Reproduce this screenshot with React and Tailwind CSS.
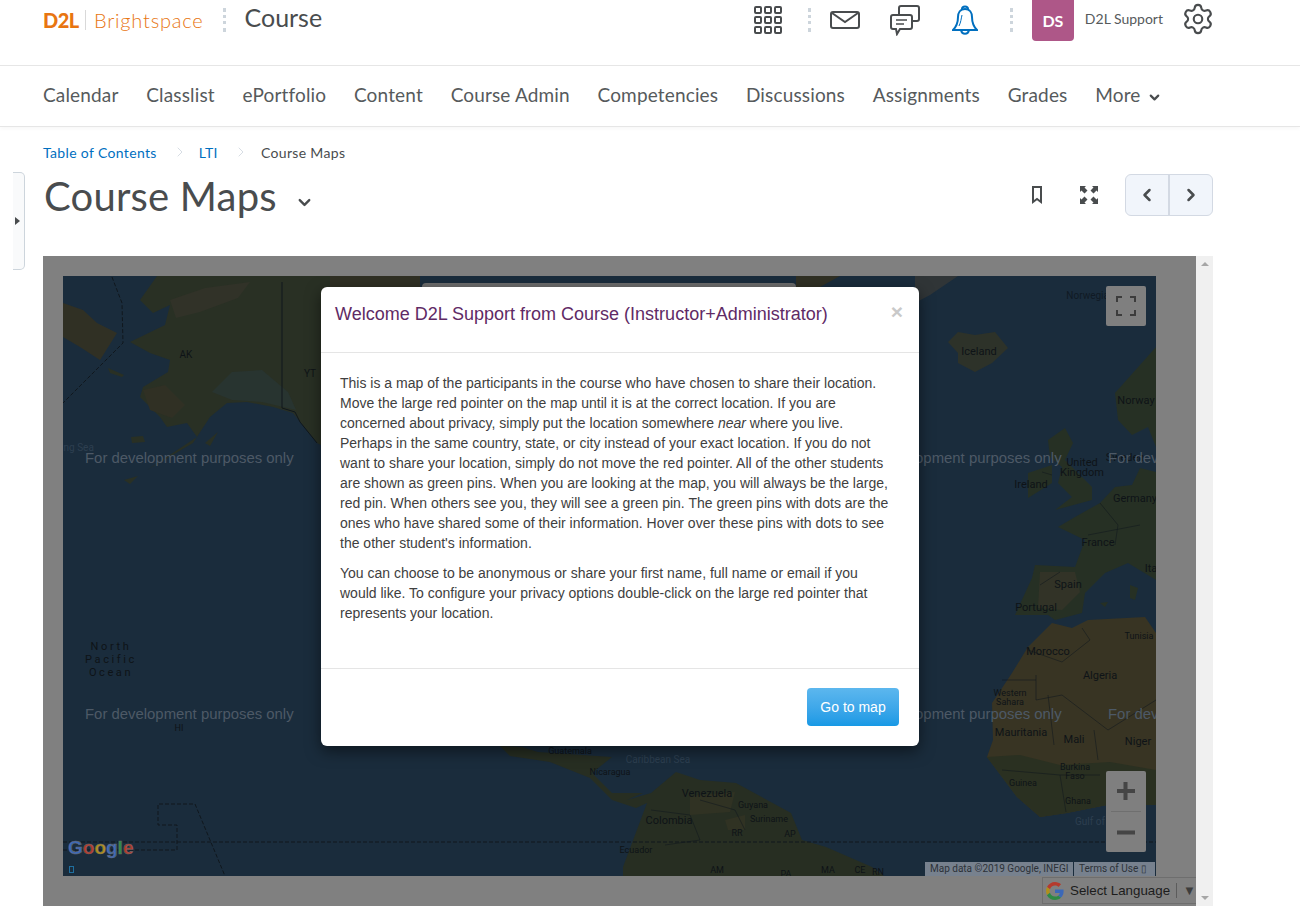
import * as React from 'react';
import { ChevronDown, ChevronLeft, ChevronRight, Settings } from 'lucide-react';

const navItems = ['Calendar', 'Classlist', 'ePortfolio', 'Content', 'Course Admin', 'Competencies', 'Discussions', 'Assignments', 'Grades'];

// [x, y, text, size, fill]
const mapLabels = [
    [186, 358, 'AK', 10], [310, 377, 'YT', 10],
    [979, 355, 'Iceland', 11], [1136, 404, 'Norway', 11], [1100, 299, 'Norwegian Sea', 10, '#101a24'],
    [1082, 466, 'United', 11], [1082, 476, 'Kingdom', 11], [1031, 488, 'Ireland', 11], [1135, 502, 'Germany', 11],
    [1098, 546, 'France', 11], [1068, 588, 'Spain', 11], [1036, 611, 'Portugal', 11], [1048, 655, 'Morocco', 11],
    [1100, 679, 'Algeria', 11], [1139, 639, 'Tunisia', 9], [1010, 696, 'Western', 9], [1010, 705, 'Sahara', 9],
    [1021, 736, 'Mauritania', 11], [1074, 743, 'Mali', 11], [1138, 745, 'Niger', 11], [1023, 786, 'Guinea', 9],
    [1075, 770, 'Burkina', 9], [1075, 779, 'Faso', 9], [1078, 804, 'Ghana', 9], [1090, 825, 'Gulf of', 10, '#2d3f50'],
    [1155, 572, 'Italy', 11], [1125, 461, 'Sweden', 11], [1172, 531, 'Austria', 10],
    [570, 754, 'Guatemala', 9], [610, 775, 'Nicaragua', 9], [658, 763, 'Caribbean Sea', 10, '#2d3f50'],
    [707, 797, 'Venezuela', 11], [753, 808, 'Guyana', 9], [769, 822, 'Suriname', 9], [669, 824, 'Colombia', 11],
    [636, 853, 'Ecuador', 9], [737, 836, 'RR', 9], [790, 837, 'AP', 9], [717, 873, 'AM', 9], [786, 877, 'PA', 9],
    [828, 873, 'MA', 9], [860, 873, 'CE', 9], [878, 875, 'RN', 9], [179, 731, 'HI', 9],
    [70, 451, 'Bering Sea', 10, '#2d3f50'],
];

const watermarks = [[85, 463], [85, 719], [853, 463], [853, 719], [1108, 463], [1108, 719]];

function DotDivider({ className }) {
    return <div className={`border-l-[3px] border-dotted border-[#cdd5dc] h-[24px] ${className}`} />;
}

function WorldMap() {
    return (
        <svg viewBox="63 276 1093 600" className="block w-full h-full">
            <rect x="63" y="276" width="1093" height="600" fill="#1a2c3c" />

            {/* north america */}
            <path fill="#293024" d="M157 276L140 300L153 313L170 305L165 325L130 342L150 353L170 360L168 372L143 387L140 397L160 417L167 427L187 423L197 437L147 470L193 443L210 417L227 403L247 402L273 407L293 413L317 443L330 450L330 276Z" />
            <path fill="#313228" d="M170 300L205 288L250 282L238 298L200 312L176 318Z" />
            <path fill="#283430" d="M212 392L232 372L262 370L288 392L296 410L262 402L232 400Z" />
            <path fill="#303024" d="M143 390L165 385L185 405L172 418L150 410Z" />
            <path fill="#293024" d="M131 437L143 436L145 442L132 443ZM108 368L124 375L122 377L110 373ZM124 480L138 476L130 484ZM205 443L218 432L210 446Z" />
            <path fill="#303024" d="M63 303L83 310L97 323L117 333L100 360L80 347L63 337Z" />
            <path fill="#303024" d="M330 276L420 276L420 287L330 287ZM796 276L840 276L820 287L796 287Z" />

            {/* central + south america */}
            <path fill="#272e22" d="M500 746L522 747L538 752L612 757L592 773L612 793L643 793L627 800L651 793L676 772L700 780L736 783L791 813L802 840L826 847L872 867L884 876L623 876L623 867L647 803L636 808L612 800L590 778L550 762L510 756Z" />
            <path fill="#303223" d="M690 796L735 792L730 812L690 815ZM725 820L745 815L745 830L728 830Z" />

            {/* greenland + iceland */}
            <path fill="#303537" d="M915 276L958 276L930 295L915 303Z" />
            <path fill="#2d3229" d="M948 342L958 332L975 335L995 332L1008 348L992 363L975 372L958 363L958 353Z" />

            {/* europe */}
            <path fill="#263024" d="M1048 440L1065 428L1073 443L1065 460L1092 487L1092 500L1055 510L1072 497L1058 483L1062 467L1050 457Z" />
            <path fill="#263024" d="M1028 473L1052 465L1052 483L1028 498Z" />
            <path fill="#263024" d="M1156 347L1115 393L1118 420L1132 435L1148 427L1156 447Z" />
            <path fill="#263024" d="M1156 472L1140 468L1132 485L1115 487L1100 503L1075 517L1058 527L1085 540L1075 567L1035 565L1032 578L1015 615L1048 615L1055 620L1082 613L1085 593L1105 573L1128 563L1156 580Z" />
            <path fill="#323327" d="M1040 572L1075 572L1080 592L1062 610L1038 608Z" />
            <path fill="#263024" d="M1130 585L1138 588L1135 600L1130 598ZM1100 603L1108 602L1105 607Z" />

            {/* africa */}
            <path fill="#383423" d="M1156 633L1145 617L1088 620L1072 628L1052 623L1028 647L1012 673L992 703L993 740L987 757L1017 797L1040 817L1067 813L1107 805L1156 805Z" />
            <path fill="#2a3021" d="M987 757L1020 755L1060 765L1110 762L1156 770L1156 805L1107 805L1067 813L1040 817L1017 797Z" />

            {/* borders */}
            <g fill="none" stroke="#10171d" strokeWidth="1">
                <path strokeDasharray="4 2" d="M63 842H1156" />
                <path strokeDasharray="4 2" d="M112 277L122 303L123 343L63 403" />
                <path strokeDasharray="4 2" d="M63 850H177V825H158V804H195L225 876" />
                <path d="M282 282V408L295 412L300 422L317 443" />
                <path opacity="0.55" d="M1052 475L1042 472M1028 650L1062 662L1090 640L1082 628M1036 680H1002M1036 675L1036 700L1062 695L1108 730L1156 700M1048 695L1054 745M1094 730L1098 760M1002 770L1060 775L1100 775M1060 775L1066 812M1100 503L1118 525L1115 545M1040 585L1060 572M651 810L690 815L700 840L665 845M700 800L735 810L745 830M1088 535L1140 525" />
            </g>

            {/* labels */}
            <g fontFamily="Roboto, sans-serif" textAnchor="middle">
                {mapLabels.map(([x, y, text, size, fill]) => (
                    <text key={text} x={x} y={y} fontSize={size} fill={fill || '#0e1317'}>{text}</text>
                ))}
                <g fontSize="11" letterSpacing="2.6" fill="#0e1317">
                    <text x="111" y="650">North</text>
                    <text x="111" y="663">Pacific</text>
                    <text x="111" y="676">Ocean</text>
                </g>
            </g>
            <g fontFamily="Liberation Sans, sans-serif" fontSize="14.9" fill="#4d5966">
                {watermarks.map(([x, y]) => (
                    <text key={`${x}-${y}`} x={x} y={y}>For development purposes only</text>
                ))}
            </g>
        </svg>
    );
}

function Modal() {
    return (
        <div className="absolute left-[278px] top-[31px] w-[598px] h-[459px] bg-white rounded-[6px] shadow-[0_5px_15px_rgba(0,0,0,0.5)] flex flex-col font-['Liberation_Sans',sans-serif]">
            <div className="h-[66px] border-b border-[#e5e5e5] pl-[14px] pr-[15px] pt-[15px] flex justify-between shrink-0">
                <h4 className="text-[18px] leading-[24px] text-[#5f2a65]">Welcome D2L Support from Course (Instructor+Administrator)</h4>
                <span className="text-[21px] leading-[20px] font-bold text-[#c9c9c9] mr-[1px]">×</span>
            </div>
            <div className="flex-1 pl-[19px] pr-[21px] pt-[20px] text-[14px] leading-[20px] text-[#404040]">
                <p className="mb-[10px]">
                    This is a map of the participants in the course who have chosen to share their location. Move the large red pointer on the map until it is at the correct location. If you are concerned about privacy, simply put the location somewhere <em>near</em> where you live. Perhaps in the same country, state, or city instead of your exact location. If you do not want to share your location, simply do not move the red pointer. All of the other students are shown as green pins. When you are looking at the map, you will always be the large, red pin. When others see you, they will see a green pin. The green pins with dots are the ones who have shared some of their information. Hover over these pins with dots to see the other student's information.
                </p>
                <p>
                    You can choose to be anonymous or share your first name, full name or email if you would like. To configure your privacy options double-click on the large red pointer that represents your location.
                </p>
            </div>
            <div className="h-[78px] border-t border-[#e5e5e5] flex justify-end pt-[19px] pr-[20px] shrink-0">
                <button className="w-[92px] h-[38px] rounded-[4px] text-[14px] text-white bg-gradient-to-b from-[#5cb7ee] to-[#1699e5]">Go to map</button>
            </div>
        </div>
    );
}

function MapPanel() {
    return (
        <div className="flex h-[650px] mt-[40px]">
            <div className="relative w-[1153px] bg-[#808080] pt-[20px] px-[20px] overflow-hidden">
                <div className="relative w-[1093px] h-[600px]">
                    <WorldMap />
                    <div className="absolute left-[359px] top-[7px] w-[374px] h-[40px] bg-[#6d6d6d] rounded-t-[4px]" />
                    <div className="absolute left-[1043px] top-[10px] w-[40px] h-[40px] bg-[#7f7f7f] rounded-[2px] flex items-center justify-center">
                        <svg width="20" height="20" viewBox="0 0 20 20" fill="none" stroke="#3c3c3c" strokeWidth="2">
                            <path d="M1 6V1H6M14 1H19V6M1 14V19H6M14 19H19V14" />
                        </svg>
                    </div>
                    <div className="absolute left-[1043px] top-[495px] w-[40px] h-[81px] bg-[#7f7f7f] rounded-[2px] flex flex-col items-center">
                        <svg width="40" height="40" viewBox="0 0 40 40" fill="#454545"><path d="M17.500 11H21.500V18H29V22H21.500V29H17.500V22H11V18H17.500Z" /></svg>
                        <div className="w-[30px] h-px bg-[#6f6f6f]" />
                        <svg width="40" height="40" viewBox="0 0 40 40" fill="#454545"><path d="M11 18.500H29V22.500H11Z" /></svg>
                    </div>
                    <div className="absolute left-[5px] top-[560px] text-[19px] leading-[24px] font-bold font-['Liberation_Sans',sans-serif] [-webkit-text-stroke:0.5px_#6b6b6b]">
                        <span className="text-[#3b68b8]">G</span><span className="text-[#b53a2d]">o</span><span className="text-[#b08f1b]">o</span><span className="text-[#3b68b8]">g</span><span className="text-[#2f8a45]">l</span><span className="text-[#b53a2d]">e</span>
                    </div>
                    <div className="absolute left-[6px] top-[590px] w-[5px] h-[7px] border border-[#1f6f9f]" />
                    <div className="absolute left-[862px] bottom-0 flex gap-px text-[10px] leading-[14px] h-[14px] font-['Roboto',sans-serif] text-[#2c3138] whitespace-nowrap">
                        <span className="w-[148px] pl-[5px] bg-[#77818e]">Map data ©2019 Google, INEGI</span>
                        <span className="w-[81px] pl-[5px] bg-[#77818e]">Terms of Use ▯</span>
                    </div>
                </div>
                <Modal />
                <div className="absolute left-[999px] top-[621px] w-[154px] h-[27px] border border-[#6e6e6e] border-r-0 bg-[#808080] flex items-center pl-[3px] text-[13.333px] text-[#1c1c1c] font-['Liberation_Sans',sans-serif] whitespace-nowrap">
                    <svg className="shrink-0" width="18" height="18" viewBox="0 0 48 48">
                        <path fill="#b53a2d" d="M24 9.500c3.500 0 6.700 1.300 9.200 3.600l6.900-6.900C35.900 2.400 30.500 0 24 0 14.600 0 6.500 5.400 2.600 13.200l8 6.200C12.400 13.700 17.700 9.500 24 9.500z" />
                        <path fill="#3b68b8" d="M47 24.500c0-1.600-.2-3.100-.4-4.500H24v9h13c-.6 3-2.200 5.500-4.700 7.200l7.300 5.700C44 37.800 47 31.700 47 24.500z" />
                        <path fill="#b08f1b" d="M10.500 28.600c-.5-1.400-.8-3-.8-4.600s.3-3.200.8-4.600l-8-6.200C1 16.400 0 20.100 0 24s1 7.600 2.600 10.800z" />
                        <path fill="#2f8a45" d="M24 48c6.500 0 11.900-2.100 15.900-5.800l-7.300-5.700c-2.200 1.500-5 2.300-8.600 2.300-6.300 0-11.600-4.200-13.500-9.900l-8 6.200C6.500 42.600 14.600 48 24 48z" />
                    </svg>
                    <span className="ml-[6px]">Select Language</span>
                    <span className="ml-[6px] w-px h-[15px] bg-[#5c5c5c]" />
                    <span className="ml-[6px] text-[13px] text-[#3d3d3d]">▼</span>
                </div>
            </div>
            <div className="w-[17px] bg-[#f0f0f0] flex flex-col items-center justify-between py-[6px]">
                <div className="w-0 h-0 border-x-[4px] border-x-transparent border-b-[4px] border-b-[#a6a6a6]" />
                <div className="w-0 h-0 border-x-[4px] border-x-transparent border-t-[4px] border-t-[#a6a6a6]" />
            </div>
        </div>
    );
}

export default function App() {
    return (
        <div className="relative w-[1300px] h-[906px] overflow-hidden bg-white font-['Lato',sans-serif] text-[#494c4e]">
            <header className="h-[66px] border-b border-[#e6e6e6] flex items-start pl-[43px] pr-[85px]">
                <div className="flex items-center h-[39px]">
                    <span className="text-[20px] font-black text-[#e87511] w-[35px] tracking-[-0.5px]">D2L</span>
                    <span className="w-px h-[20px] bg-[#d9d9d9] ml-[7px]" />
                    <span className="text-[20px] text-[#e87511] ml-[8px] font-light tracking-[0.8px]">Brightspace</span>
                    <DotDivider className="ml-[19px]" />
                    <span className="text-[25px] ml-[19px] -mt-[3px]">Course</span>
                </div>
                <div className="ml-auto flex items-start">
                    <svg className="mt-[6px]" width="28" height="28" viewBox="0 0 28 28" fill="none" stroke="#494c4e" strokeWidth="2">
                        {[1, 11, 21].map((y) => [1, 11, 21].map((x) => (
                            <rect key={`${x}${y}`} x={x} y={y} width="6" height="6" rx="1" />
                        )))}
                    </svg>
                    <DotDivider className="mt-[8px] ml-[26px]" />
                    <svg className="mt-[11px] ml-[19px]" width="30" height="18" viewBox="0 0 30 18" fill="none" stroke="#494c4e" strokeWidth="2">
                        <rect x="1" y="1" width="28" height="16" rx="2" />
                        <path d="M2 2L15 11L28 2" />
                    </svg>
                    <svg className="mt-[5px] ml-[30px]" width="30" height="31" viewBox="0 0 30 31" fill="none" stroke="#494c4e" strokeWidth="2">
                        <path d="M9 9V3Q9 1 11 1H27Q29 1 29 3V14Q29 16 27 16H23" />
                        <path d="M3 10H20Q22 10 22 12V22Q22 24 20 24H10L7 29L6 24H3Q1 24 1 22V12Q1 10 3 10Z" />
                        <path d="M6 15H17M6 19H14" strokeWidth="1.500" />
                    </svg>
                    <svg className="mt-[5px] ml-[32px]" width="26" height="30" viewBox="0 0 26 30" fill="none" stroke="#006fbf" strokeWidth="2">
                        <path d="M13 4C8 4 6 8 6 12C6 18 4 22 1 25H25C22 22 20 18 20 12C20 8 18 4 13 4Z" />
                        <path d="M10 4C10 0.500 16 0.500 16 4M9 25C10 30 16 30 17 25" />
                        <path d="M10 10C9 14 9 17 7 21" strokeWidth="1" />
                    </svg>
                    <DotDivider className="mt-[8px] ml-[32px]" />
                    <div className="ml-[19px] w-[42px] h-[41px] bg-[#ae5788] rounded-b-[4px] text-white font-bold text-[16px] flex items-center justify-center">DS</div>
                    <span className="ml-[11px] mt-[10px] text-[14px] leading-[18px] text-[#565a5c]">D2L Support</span>
                    <Settings className="ml-[18px] mt-[2px]" size={34} strokeWidth={1.5} />
                </div>
            </header>

            <nav className="h-[61px] border-b border-[#e6e6e6] shadow-[0_2px_4px_rgba(0,0,0,0.03)] flex items-center gap-[27.800px] pl-[43px] pb-[1px] text-[19px] tracking-[0.15px] text-[#565a5c]">
                {navItems.map((item) => (
                    <a key={item}>{item}</a>
                ))}
                <a className="flex items-center gap-[6px]">More <ChevronDown size={15} strokeWidth={3.500} className="mt-[3px] text-[#494c4e]" /></a>
            </nav>

            <div className="absolute left-[13px] top-[172px] w-[12px] h-[98px] bg-[#f9fafb] border border-l-0 border-[#cdd5dc] rounded-r-[5px] flex items-center">
                <div className="ml-[2px] w-0 h-0 border-y-[4px] border-y-transparent border-l-[5px] border-l-[#494c4e]" />
            </div>

            <main className="pl-[43px] pr-[87px]">
                <div className="flex items-center h-[18px] mt-[16px] text-[14px] tracking-[0.35px]">
                    <a className="text-[#006fbf]">Table of Contents</a>
                    <ChevronRight className="ml-[15px] text-[#c3ccd6]" size={16} strokeWidth={1} />
                    <a className="ml-[11px] text-[#006fbf]">LTI</a>
                    <ChevronRight className="ml-[15px] text-[#c3ccd6]" size={16} strokeWidth={1} />
                    <span className="ml-[12px]">Course Maps</span>
                </div>
                <div className="flex items-start mt-[13px] h-[42px]">
                    <h1 className="text-[40px] leading-[42px] ml-[1px] mt-[1px] tracking-[0.2px]">Course Maps</h1>
                    <ChevronDown className="ml-[18px] mt-[19px]" size={19} strokeWidth={3} />
                    <div className="ml-auto flex items-start">
                        <svg className="mt-[12px]" width="10" height="18" viewBox="0 0 10 18" fill="none" stroke="#494c4e" strokeWidth="2">
                            <path d="M1 1H9V16L5 13L1 16Z" />
                        </svg>
                        <svg className="mt-[12px] ml-[38px]" width="18" height="18" viewBox="0 0 18 18" fill="#494c4e">
                            <path d="M0 0H6L4.500 1.500L7.500 4.500L4.500 7.500L1.500 4.500L0 6ZM18 0V6L16.500 4.500L13.500 7.500L10.500 4.500L13.500 1.500L12 0ZM0 18V12L1.500 13.500L4.500 10.500L7.500 13.500L4.500 16.500L6 18ZM18 18H12L13.500 16.500L10.500 13.500L13.500 10.500L16.500 13.500L18 12Z" />
                        </svg>
                        <div className="ml-[27px] w-[88px] h-[42px] bg-[#f1f5fb] border border-[#d3d9e3] rounded-[6px] flex">
                            <div className="flex-1 flex items-center justify-center border-r-2 border-[#d3d9e3]"><ChevronLeft size={20} strokeWidth={3} /></div>
                            <div className="flex-1 flex items-center justify-center"><ChevronRight size={20} strokeWidth={3} /></div>
                        </div>
                    </div>
                </div>
                <MapPanel />
            </main>
        </div>
    );
}
